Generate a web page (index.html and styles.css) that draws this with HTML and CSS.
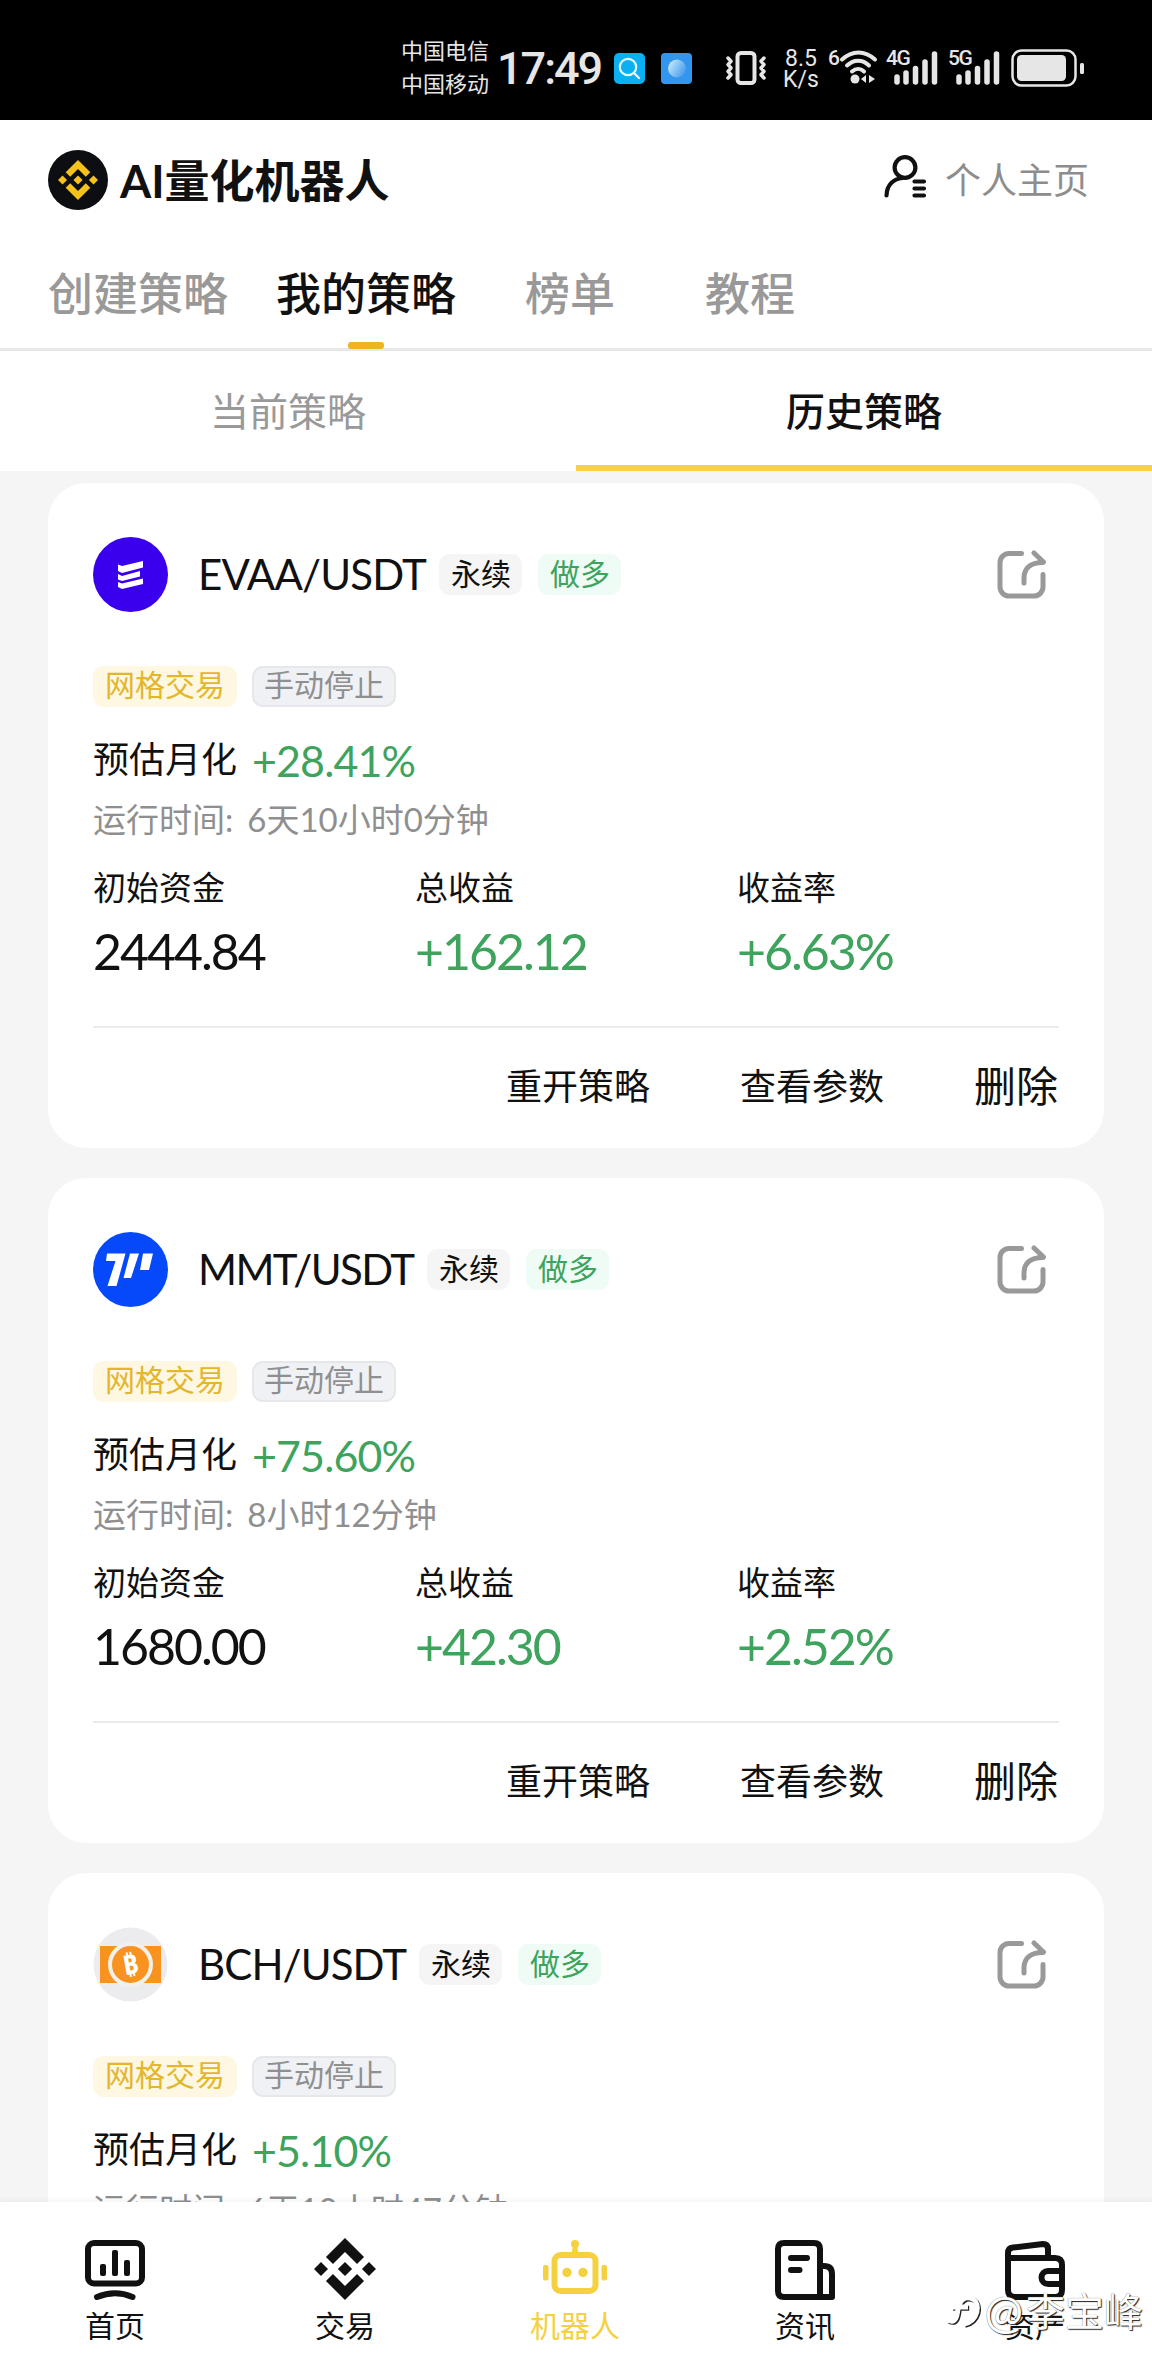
FILE: index.html
```html
<!DOCTYPE html>
<html lang="zh-CN">
<head>
<meta charset="utf-8">
<title>AI量化机器人</title>
<link rel="stylesheet" href="styles.css">
</head>
<body>
<svg class="defs" width="0" height="0" aria-hidden="true">
  <symbol id="bnb" viewBox="0 0 126.61 126.61"><path d="M38.73 53.2L63.3 28.62 87.88 53.2l14.3-14.3L63.3 0 24.43 38.9zM0 63.31l14.3-14.3 14.3 14.3-14.3 14.3zM38.73 73.41L63.3 98l24.58-24.59 14.3 14.29L63.3 126.61 24.42 87.74zM98 63.31l14.3-14.3 14.31 14.3-14.31 14.3zM77.83 63.3L63.3 48.78 48.78 63.31 63.3 77.82z"/></symbol>
  <symbol id="share" viewBox="0 0 50 50"><path d="M24.500 3.500H12a9 9 0 0 0-9 9V37a9 9 0 0 0 9 9h25a9 9 0 0 0 9-9V24.500M27 33v-5c0-9.500 6-15.500 19-15.500M37 3l9.500 9" fill="none" stroke="#999" stroke-width="5" stroke-linecap="round" stroke-linejoin="round"/></symbol>
</svg>
<div class="app">
  <div class="status">
    <div class="carrier"><span>中国电信</span><span>中国移动</span></div>
    <span class="clock">17:49</span>
    <svg class="st-search" width="31" height="31" viewBox="0 0 31 31"><rect width="31" height="31" rx="5" fill="#0bb0f3"/><circle cx="14" cy="14" r="8.200" fill="none" stroke="#e8faff" stroke-width="2.200"/><path d="M20 20l5 5" stroke="#e8faff" stroke-width="2.200" stroke-linecap="round"/></svg>
    <svg class="st-weather" width="31" height="31" viewBox="0 0 31 31"><defs><linearGradient id="ball" x1="0" y1="0" x2="1" y2=".6"><stop offset="0" stop-color="#d5f0ff"/><stop offset="1" stop-color="#4a9fee"/></linearGradient></defs><rect width="31" height="31" rx="4" fill="#3396ee"/><circle cx="16" cy="15.500" r="9" fill="url(#ball)"/></svg>
    <svg class="st-vibrate" width="42" height="34" viewBox="0 0 42 34" fill="none" stroke="#e6e6e6" stroke-linecap="round" stroke-linejoin="round"><rect x="12.500" y="2" width="17" height="30" rx="3.500" stroke-width="4"/><path d="M3 7l3 3.300-3 3.300 3 3.400-3 3.400 3 3.300-3 3.300M39 7l-3 3.300 3 3.300-3 3.400 3 3.400-3 3.300 3 3.300" stroke-width="3.500"/></svg>
    <div class="speed"><span>8.5</span><span>K/s</span></div>
    <span class="gen gen-wifi">6</span>
    <svg class="st-wifi" width="39" height="34" viewBox="0 0 39 34"><g fill="none" stroke="#e6e6e6" stroke-width="4" stroke-linecap="round"><path d="M3 9.500c10-9.500 23-9.500 33 0M8 15.500c7-6.500 15.500-6.500 22 0M13 21.500c4-3.500 8.500-3.500 12 0"/></g><circle cx="16" cy="29" r="4.500" fill="#e6e6e6"/><path d="M22 29l5-4v8zM30 25v8l6-4z" fill="#e6e6e6"/></svg>
    <span class="gen gen-cell">4G</span>
    <svg class="st-bars" width="44" height="34" viewBox="0 0 44 34"><path d="M3 26v5M12 22v9M21.500 17.500V31M31 11v20M40.500 3v28" stroke="#e6e6e6" stroke-width="5.500" stroke-linecap="round"/></svg>
    <span class="gen gen-cell gen-second">5G</span>
    <svg class="st-bars" width="44" height="34" viewBox="0 0 44 34"><path d="M3 26v5M12 22v9M21.500 17.500V31M31 11v20M40.500 3v28" stroke="#e6e6e6" stroke-width="5.500" stroke-linecap="round"/></svg>
    <svg class="st-battery" width="74" height="38" viewBox="0 0 74 38"><rect x="1.500" y="1.500" width="63" height="35" rx="9" fill="none" stroke="#e6e6e6" stroke-width="2.500"/><rect x="6" y="6" width="49" height="26" rx="4.500" fill="#e6e6e6"/><rect x="69" y="14" width="4" height="11" rx="1.500" fill="#e6e6e6"/></svg>
  </div>

  <header class="header">
    <div class="brand">
      <span class="logo"><svg width="40" height="40" fill="#f5c21b"><use href="#bnb"/></svg></span>
      <h1>AI量化机器人</h1>
      <a class="profile">
        <svg width="43" height="43" viewBox="0 0 43 43" fill="none" stroke="#111" stroke-width="4.200" stroke-linecap="round"><circle cx="21" cy="12.500" r="10.400"/><path d="M2.500 40.500c.500-11 7-16.500 16-17.500M30.500 26.500H40M30.500 33.500H40M30.500 40.500H40"/></svg>
        <span>个人主页</span>
      </a>
    </div>
    <nav class="tabs">
      <a class="tab">创建策略</a>
      <a class="tab tab-on tab-mine">我的策略</a>
      <a class="tab tab-rank">榜单</a>
      <a class="tab tab-guide">教程</a>
    </nav>
    <div class="subtabs">
      <a class="subtab">当前策略</a>
      <a class="subtab subtab-on">历史策略</a>
    </div>
  </header>

  <main class="list">
    <article class="card">
      <div class="head">
        <svg class="coin" viewBox="0 0 75 75"><circle cx="37.500" cy="37.500" r="37.500" fill="#3a00ee"/><path d="M25 27.500l4 1.500 21-5v6.500l-21 5.500-4-2zM25 37l4 2 18-5v5.500L29 44l-4-1.500zM25 45l4 1.500 21-5V47l-21 5-4-2z" fill="#fff"/></svg>
        <h2>EVAA/USDT</h2>
        <span class="chip chip-perp">永续</span><span class="chip chip-long">做多</span>
        <svg class="share"><use href="#share"/></svg>
      </div>
      <div class="tags"><span class="tag tag-grid">网格交易</span><span class="tag tag-stop">手动停止</span></div>
      <div class="rate"><span>预估月化</span><b>+28.41%</b></div>
      <div class="time"><span>运行时间:</span><span>6天10小时0分钟</span></div>
      <dl class="stats">
        <div><dt>初始资金</dt><dd>2444.84</dd></div>
        <div><dt>总收益</dt><dd class="up">+162.12</dd></div>
        <div><dt>收益率</dt><dd class="up">+6.63%</dd></div>
      </dl>
      <div class="actions"><a>重开策略</a><a>查看参数</a><a class="del">删除</a></div>
    </article>

    <article class="card">
      <div class="head">
        <svg class="coin" viewBox="0 0 75 75"><circle cx="37.500" cy="37.500" r="37.500" fill="#0549fb"/><path d="M14 21.500h18.500L23.500 54h-9l8-25h-9.500zM37 21.500h9L38 46h-7.500zM50 21.500h10L56 38h-9z" fill="#fff"/></svg>
        <h2 class="t-mmt">MMT/USDT</h2>
        <span class="chip chip-perp">永续</span><span class="chip chip-long">做多</span>
        <svg class="share"><use href="#share"/></svg>
      </div>
      <div class="tags"><span class="tag tag-grid">网格交易</span><span class="tag tag-stop">手动停止</span></div>
      <div class="rate"><span>预估月化</span><b>+75.60%</b></div>
      <div class="time"><span>运行时间:</span><span>8小时12分钟</span></div>
      <dl class="stats">
        <div><dt>初始资金</dt><dd>1680.00</dd></div>
        <div><dt>总收益</dt><dd class="up">+42.30</dd></div>
        <div><dt>收益率</dt><dd class="up">+2.52%</dd></div>
      </dl>
      <div class="actions"><a>重开策略</a><a>查看参数</a><a class="del">删除</a></div>
    </article>

    <article class="card">
      <div class="head">
        <svg class="coin" viewBox="0 0 75 75"><circle cx="37.500" cy="37.500" r="37" fill="#ececee"/><path d="M7 19h61v37H7z" fill="#f7931e"/><circle cx="37.500" cy="37.500" r="20.500" fill="#f7931e" stroke="#f3f0ec" stroke-width="4"/><text class="btc" x="37.500" y="47" text-anchor="middle" transform="rotate(-10 37.500 37.500)">₿</text></svg>
        <h2 class="t-bch">BCH/USDT</h2>
        <span class="chip chip-perp">永续</span><span class="chip chip-long">做多</span>
        <svg class="share"><use href="#share"/></svg>
      </div>
      <div class="tags"><span class="tag tag-grid">网格交易</span><span class="tag tag-stop">手动停止</span></div>
      <div class="rate"><span>预估月化</span><b>+5.10%</b></div>
      <div class="time"><span>运行时间:</span><span>6天10小时47分钟</span></div>
    </article>
  </main>

  <nav class="dock">
    <a><svg viewBox="0 0 60 60" fill="none" stroke="#111" stroke-width="6" stroke-linecap="round"><rect x="3" y="3" width="54" height="40.500" rx="6"/><path d="M12 57Q30 49.500 47.500 57"/><path d="M15 26a2 2 0 0 1 2-2h2a2 2 0 0 1 2 2v8a2 2 0 0 1-2 2h-2a2 2 0 0 1-2-2zM27 12a2 2 0 0 1 2-2h2a2 2 0 0 1 2 2v22a2 2 0 0 1-2 2h-2a2 2 0 0 1-2-2zM39 22a2 2 0 0 1 2-2h2a2 2 0 0 1 2 2v12a2 2 0 0 1-2 2h-2a2 2 0 0 1-2-2z" fill="#111" stroke="none"/></svg><span>首页</span></a>
    <a><svg class="dock-trade" fill="#111"><use href="#bnb"/></svg><span>交易</span></a>
    <a class="dock-on"><svg class="dock-bot" viewBox="0 0 64 60" fill="#f6d13f"><rect x="11.500" y="15" width="41" height="36" rx="6" fill="none" stroke="#f6d13f" stroke-width="6"/><circle cx="32" cy="4" r="4"/><path d="M30 5h4l1.500 9h-7z"/><rect y="25" width="5.500" height="15.500" rx="2"/><rect x="58.500" y="25" width="5.500" height="15.500" rx="2"/><circle cx="24" cy="32.500" r="4.700"/><circle cx="40" cy="32.500" r="4.700"/></svg><span>机器人</span></a>
    <a><svg viewBox="0 0 60 60" fill="none" stroke="#111" stroke-width="6" stroke-linejoin="round"><path d="M45 57V9q0-6-6-6H9q-6 0-6 6v42q0 6 6 6h48V34q0-8-8-8h-4"/><path d="M16 18h16M16 30h8.500" stroke-linecap="round"/></svg><span>资讯</span></a>
    <a><svg viewBox="0 0 60 60" fill="none" stroke="#111" stroke-width="6" stroke-linejoin="round"><path d="M3 18h47q7 0 7 7v25q0 7-7 7H10q-7 0-7-7V13q0-5 5-5.500L38 4q5 0 5 5v9M57 31H43a6.500 6.500 0 0 0 0 13h14"/></svg><span>资产</span></a>
  </nav>

  <div class="watermark">
    <svg width="38" height="40" viewBox="0 0 38 40" fill="none" stroke-width="5"><path d="M4 29c8 4 9-4 10-11 1-8 7-14 15-10 8 5 5 22-9 25M8 16h16" stroke="#222" transform="translate(1.200 1.200)"/><path d="M4 29c8 4 9-4 10-11 1-8 7-14 15-10 8 5 5 22-9 25M8 16h16" stroke="#fff"/></svg>
    <span class="at">@</span><span>李宝峰</span>
  </div>
</div>
</body>
</html>
```
FILE: styles.css
```css
* { box-sizing: border-box; margin: 0; padding: 0; }
body {
  width: 1152px;
  background: #f5f5f5;
  color: #111;
  font-family: "Lato", "Noto Sans CJK SC", sans-serif;
}
.defs { position: absolute; }
.app {
  position: relative;
  display: flex;
  flex-direction: column;
  height: 2376px;
  overflow: hidden;
}

/* system status bar */
.status {
  display: flex;
  align-items: flex-start;
  flex: none;
  height: 120px;
  padding: 34px 0 0 401px;
  background: #000;
  color: #e6e6e6;
}
.status svg { flex: none; }
.carrier { display: flex; flex-direction: column; width: 96px; font-size: 22px; line-height: 33px; white-space: nowrap; }
.clock { width: 117px; margin-top: 10px; font: 500 45px/50px "Roboto", sans-serif; letter-spacing: -2px; white-space: nowrap; }
.st-search { margin-top: 19px; }
.st-weather { margin: 19px 0 0 16px; }
.st-vibrate { margin: 17px 0 0 33px; }
.speed { display: flex; flex-direction: column; align-items: center; width: 36px; margin: 14px 0 0 16px; font: 400 23px/21px "Roboto", sans-serif; }
.gen { margin-top: 14px; font: 500 21px/21px "Roboto", sans-serif; white-space: nowrap; }
.gen-wifi { width: 11px; margin-left: 9px; }
.st-wifi { margin-top: 16px; }
.gen-cell { width: 8px; margin-left: 8px; letter-spacing: -1.5px; }
.gen-second { margin-left: 10px; }
.st-bars { margin-top: 17px; }
.st-battery { margin: 15px 0 0 11px; }

/* page header */
.header { flex: none; background: #fff; }
.brand { display: flex; align-items: center; height: 120px; padding: 0 63px 0 48px; }
.logo { display: flex; align-items: center; justify-content: center; width: 60px; height: 60px; border-radius: 50%; background: #0d0e11; }
.brand h1 { margin: 2px 0 0 12px; font: 700 45px/60px "Lato", "Noto Sans CJK SC", sans-serif; }
.profile { display: flex; align-items: center; gap: 18px; margin-left: auto; color: #8d8d8d; font-size: 36px; line-height: 50px; }
.profile svg { margin-top: -7px; }
.tabs { display: flex; height: 111px; padding-left: 48px; border-bottom: 3px solid #e8e8e8; }
.tab { height: 108px; padding-top: 24px; color: #999; font-size: 45px; font-weight: 500; line-height: 60px; }
.tab-on { display: flex; flex-direction: column; align-items: center; color: #111; }
.tab-on::after { content: ""; width: 36px; height: 7px; margin-top: 18px; border-radius: 3px; background: #ebb61f; flex: none; }
.tab-mine { margin-left: 48px; }
.tab-rank { margin-left: 69px; }
.tab-guide { margin-left: 90px; }
.subtabs { display: grid; grid-template-columns: 1fr 1fr; height: 120px; }
.subtab { padding-top: 30px; color: #999; font-size: 39px; line-height: 60px; text-align: center; border-bottom: 6px solid #fff; }
.subtab-on { color: #111; font-weight: 500; border-bottom-color: #f8d048; }

/* strategy cards */
.list { flex: 1; min-height: 0; display: flex; flex-direction: column; gap: 30px; padding: 12px 48px 0; overflow: hidden; }
.card { flex: none; height: 665px; padding: 54px 45px 0; border-radius: 38px; background: #fff; }
.head { display: flex; align-items: center; height: 75px; }
.coin { width: 75px; height: 75px; }
.btc { font: 700 27px "DejaVu Sans", "Noto Sans", sans-serif; fill: #fff; }
.head h2 { width: 241px; padding: 0 0 2px 30px; margin-right: 30px; font-weight: 400; font-size: 42px; line-height: 60px; letter-spacing: -.8px; white-space: nowrap; }
.head .t-mmt { width: 229px; letter-spacing: -1.6px; }
.head .t-bch { width: 221px; letter-spacing: -.9px; }
.chip, .tag { height: 41px; padding: 0 12px; border-radius: 11px; font-size: 30px; line-height: 38px; white-space: nowrap; }
.chip { width: 83px; text-align: center; }
.chip-perp { background: #f5f5f5; }
.chip-long { margin-left: 16px; background: #effbf5; color: #3da35d; }
.share { width: 50px; height: 50px; margin: 0 12px 0 auto; }
.tags { display: flex; gap: 15px; margin-top: 54px; }
.tag { width: 144px; line-height: 37px; }
.tag-grid { background: #fef7e2; color: #e3b62c; }
.tag-stop { padding: 0 10px; border: 2px solid #e6e7eb; background: #f0f1f5; color: #8f8f8f; line-height: 33px; }
.rate { display: flex; gap: 15px; height: 50px; margin-top: 27px; font-size: 36px; line-height: 50px; }
.rate b { color: #3da35d; font-weight: 400; font-size: 43px; line-height: 53px; letter-spacing: -.9px; }
.time { display: flex; gap: 14px; height: 40px; margin-top: 16px; color: #8f8f8f; font-size: 33px; line-height: 38px; }
.stats { display: grid; grid-template-columns: repeat(3, 1fr); margin-top: 25px; padding-bottom: 45px; border-bottom: 2px solid #ebebeb; }
.stats dt { font-size: 33px; line-height: 44px; }
.stats dd { margin-top: 12px; font-size: 50px; line-height: 60px; letter-spacing: -2px; }
.stats .up { color: #3da35d; }
.actions { display: flex; justify-content: flex-end; gap: 90px; margin-top: 28px; padding-right: 1px; font-size: 36px; line-height: 60px; }
.actions .del { font-size: 42px; }

/* bottom navigation */
.dock { position: relative; display: grid; grid-template-columns: repeat(5, 1fr); flex: none; height: 174px; padding-right: 2px; background: #fff; box-shadow: 0 -2px 6px rgba(0, 0, 0, .05); }
.dock a { display: flex; flex-direction: column; align-items: center; padding-top: 38px; font-size: 30px; line-height: 40px; }
.dock svg { width: 60px; height: 60px; margin-bottom: 5px; overflow: visible; }
.dock .dock-trade { width: 62px; height: 62px; margin: -2px 0 5px; }
.dock .dock-bot { width: 64px; }
.dock-on { color: #f6d13f; }

/* author mark laid over the dock */
.watermark {
  position: absolute;
  right: 9px;
  bottom: 40px;
  display: flex;
  align-items: center;
  gap: 3px;
  color: #fff;
  font-size: 39px;
  line-height: 50px;
  text-shadow: 1px 1px 1px #222, 0 0 1px #666;
}
.watermark .at { font-size: 46px; }
```
